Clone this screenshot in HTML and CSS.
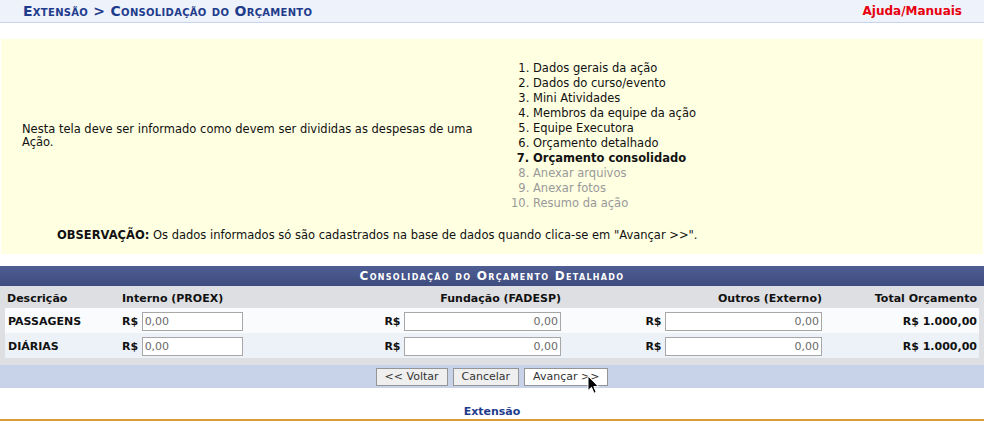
FILE: index.html
```html
<!DOCTYPE html>
<html lang="pt-BR">
<head>
<meta charset="utf-8">
<title>Consolidação do Orçamento</title>
<link rel="stylesheet" href="styles.css">
</head>
<body>
<header class="topbar">
  <h2 class="title">Extensão &gt; Consolidação do Orçamento</h2>
  <a class="help" href="#">Ajuda/Manuais</a>
</header>

<section class="info">
  <div class="info-cols">
    <div class="info-text">Nesta tela deve ser informado como devem ser divididas as despesas de uma Ação.</div>
    <ol class="steps">
      <li>Dados gerais da ação</li>
      <li>Dados do curso/evento</li>
      <li>Mini Atividades</li>
      <li>Membros da equipe da ação</li>
      <li>Equipe Executora</li>
      <li>Orçamento detalhado</li>
      <li class="current">Orçamento consolidado</li>
      <li class="todo">Anexar arquivos</li>
      <li class="todo">Anexar fotos</li>
      <li class="todo">Resumo da ação</li>
    </ol>
  </div>
  <p class="obs"><b>OBSERVAÇÃO:</b> Os dados informados só são cadastrados na base de dados quando clica-se em "Avançar &gt;&gt;".</p>
</section>

<section class="form">
  <div class="caption">Consolidação do Orçamento Detalhado</div>
  <div class="form-body">
    <table class="grid">
      <thead>
        <tr>
          <th class="c1">Descrição</th>
          <th class="c2">Interno (PROEX)</th>
          <th class="c3">Fundação (FADESP)</th>
          <th class="c4">Outros (Externo)</th>
          <th class="c5">Total Orçamento</th>
        </tr>
      </thead>
      <tbody>
        <tr class="odd">
          <th class="c1">PASSAGENS</th>
          <td class="c2"><b>R$</b> <input class="in small" type="text" value="0,00"></td>
          <td class="c3"><b>R$</b> <input class="in wide" type="text" value="0,00"></td>
          <td class="c4"><b>R$</b> <input class="in wide" type="text" value="0,00"></td>
          <td class="c5"><b>R$ 1.000,00</b></td>
        </tr>
        <tr class="even">
          <th class="c1">DIÁRIAS</th>
          <td class="c2"><b>R$</b> <input class="in small" type="text" value="0,00"></td>
          <td class="c3"><b>R$</b> <input class="in wide" type="text" value="0,00"></td>
          <td class="c4"><b>R$</b> <input class="in wide" type="text" value="0,00"></td>
          <td class="c5"><b>R$ 1.000,00</b></td>
        </tr>
      </tbody>
    </table>
  </div>
  <div class="actions">
    <button class="btn" type="button">&lt;&lt; Voltar</button>
    <button class="btn" type="button">Cancelar</button>
    <button class="btn hover" type="button">Avançar &gt;&gt;</button>
    <svg class="cursor" width="13" height="20" viewBox="0 0 13 20" aria-hidden="true">
      <path d="M1 1 L1 15.5 L4.5 12.3 L7 18.2 L9.2 17.3 L6.8 11.6 L11.4 11.6 Z" fill="#000" stroke="#fff" stroke-width="1" stroke-linejoin="round"/>
    </svg>
  </div>
</section>

<footer class="footer">
  <span>Extensão</span>
</footer>
</body>
</html>
```

FILE: styles.css
```css
* { box-sizing: border-box; }

html, body {
  margin: 0;
  padding: 0;
  background: #fff;
}

body {
  font-family: "DejaVu Sans", Verdana, sans-serif;
  font-size: 11px;
  color: #111;
  width: 984px;
  height: 421px;
  overflow: hidden;
}

.topbar {
  height: 23px;
  display: flex;
  align-items: center;
  justify-content: space-between;
  padding: 0 22px 0 23px;
  background: #eef2fa;
  border-bottom: 1px solid #c6d3ec;
}

.title {
  margin: 0;
  font-size: 14px;
  font-weight: bold;
  font-variant: small-caps;
  letter-spacing: 0.3px;
  color: #1f3c8c;
  line-height: 15px;
}

.help {
  font-size: 12px;
  font-weight: bold;
  color: #e8000f;
  text-decoration: none;
}

.info {
  margin: 16px 1px 0 1px;
  height: 215px;
  background: #ffffe1;
  padding: 22px 0 0 0;
  font-size: 11.5px;
}

.info-cols {
  display: flex;
  align-items: center;
}

.info-text {
  width: 491px;
  padding: 0 14px 0 21px;
  line-height: 13px;
}

.steps {
  margin: 0;
  padding-left: 41px;
  line-height: 15px;
}

.steps .current { font-weight: bold; }
.steps .todo { color: #999; }

.obs {
  margin: 17px 0 0 56px;
  line-height: 14px;
}

.form {
  margin-top: 12px;
  position: relative;
}

.caption {
  height: 20px;
  line-height: 21px;
  text-align: center;
  font-size: 12px;
  font-weight: bold;
  font-variant: small-caps;
  letter-spacing: 1.3px;
  color: #fff;
  background: linear-gradient(#4f5e93, #3d4b7e);
}

.form-body {
  background: #dedfe3;
  padding: 0 5px 7px 5px;
}

.grid {
  width: 100%;
  border-collapse: collapse;
  table-layout: fixed;
}

.grid th, .grid td {
  padding: 0 2px;
  white-space: nowrap;
}

.grid thead th {
  height: 22px;
  font-weight: bold;
  vertical-align: middle;
  padding-top: 2px;
}

.grid tbody tr { height: 25px; }
.grid tbody th, .grid tbody td { vertical-align: middle; padding-top: 1px; }
.grid tbody th { text-align: left; padding-left: 3px; }

.odd { background: #f9fbfd; }
.even { background: #edf1f8; }

.c1 { width: 113px; text-align: left; }
.c2 { width: 260px; text-align: left; }
.grid .c2 { padding-left: 4px; }
.c3 { width: 186px; text-align: right; }
.c4 { width: 261px; text-align: right; }
.c5 { text-align: right; }
.grid thead .c1 { padding-left: 2px; }
.grid .c3, .grid .c4 { padding-right: 3px; }

.in {
  height: 19px;
  border: 1px solid #a7a7a7;
  background: #fff;
  font-family: "DejaVu Sans", Verdana, sans-serif;
  font-size: 11px;
  color: #6a6a6a;
  padding: 0 2px;
  margin: 0;
  vertical-align: middle;
}

.in.small { width: 101px; text-align: left; }
.in.wide { width: 157px; text-align: right; }

.actions {
  height: 23px;
  background: #c8d3ea;
  display: flex;
  justify-content: center;
  align-items: center;
  gap: 5px;
  position: relative;
}

.btn {
  height: 18px;
  padding: 0 8px;
  font-family: "DejaVu Sans", Verdana, sans-serif;
  font-size: 11px;
  color: #333;
  background: #efefef;
  border: 1px solid #959595;
  border-radius: 0;
  line-height: 16px;
}

.btn.hover { background: #fff; }

.cursor {
  position: absolute;
  left: 587px;
  top: 10px;
}

.footer {
  height: 33px;
  padding-top: 17px;
  text-align: center;
  border-bottom: 2px solid #dc9c3d;
}

.footer span {
  font-weight: bold;
  color: #1f3c8c;
  line-height: 13px;
}
```
